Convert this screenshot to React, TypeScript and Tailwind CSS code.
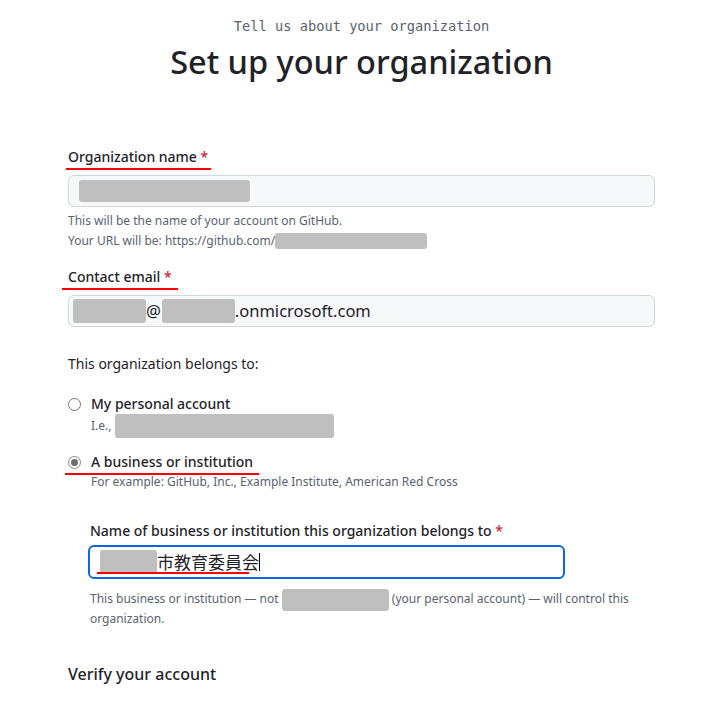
import React from "react";

const R = ({ w, h, className = "" }: { w: string; h: string; className?: string }) => (
  <span className={`inline-block bg-[#bfbfbf] rounded-[3px] align-middle ${w} ${h} ${className}`} />
);

export default function App() {
  return (
    <div className="w-[709px] h-[721px] bg-white overflow-hidden font-['Noto_Sans',sans-serif] text-[#1f2328]">
      <div className="ml-[68px] w-[587px] flex flex-col">
        <div className="pt-[16px] text-center font-['DejaVu_Sans_Mono',monospace] text-[13.7px] leading-[20px] text-[#59636e]">
          Tell us about your organization
        </div>
        <h1 className="text-center text-[32.5px] leading-[40px] font-medium mt-[6px]">Set up your organization</h1>

        <div className="mt-[65px] flex flex-col">
          <div className="relative w-fit text-[14px] leading-[20px] font-medium">
            Organization name <span className="text-[#d1242f]">*</span>
            <span className="absolute left-[-2px] right-[-3px] top-[21px] h-[2px] bg-[#ff0000]" />
          </div>
          <div className="mt-[8px] h-[32px] rounded-[6px] border border-[#d0d7de] bg-[#f6f8fa] flex items-center px-[10px]">
            <R w="w-[171px]" h="h-[22px]" />
          </div>
          <div className="mt-[4px] text-[12px] leading-[20px] text-[#59636e]">This will be the name of your account on GitHub.</div>
          <div className="text-[12px] leading-[20px] text-[#59636e] flex items-center">
            Your URL will be: https://github.com/<R w="w-[152px]" h="h-[16px]" />
          </div>

          <div className="mt-[16px] relative w-fit text-[14px] leading-[20px] font-medium">
            Contact email <span className="text-[#d1242f]">*</span>
            <span className="absolute left-[-6px] right-[-6px] top-[21px] h-[2px] bg-[#ff0000]" />
          </div>
          <div className="mt-[8px] h-[32px] rounded-[6px] border border-[#d0d7de] bg-[#f6f8fa] flex items-center pl-[4px] text-[16.5px]">
            <R w="w-[73px]" h="h-[24px]" />
            <span>@</span>
            <R w="w-[73px]" h="h-[24px]" className="ml-[1px]" />
            <span>.onmicrosoft.com</span>
          </div>

          <div className="mt-[27px] text-[14px] leading-[20px]">This organization belongs to:</div>

          <div className="mt-[20px] flex items-start">
            <span className="mt-[4px] w-[13px] h-[13px] rounded-full border border-[#767676] bg-white shrink-0" />
            <div className="ml-[10px] flex flex-col">
              <div className="text-[14px] leading-[20px] font-medium">My personal account</div>
              <div className="text-[12px] leading-[24px] text-[#59636e] flex items-center">
                I.e.,&nbsp;<R w="w-[219px]" h="h-[24px]" />
              </div>
            </div>
          </div>

          <div className="mt-[14px] flex items-start">
            <span className="mt-[4px] w-[13px] h-[13px] rounded-full border border-[#8a8a8a] bg-white shrink-0 flex items-center justify-center">
              <span className="w-[7px] h-[7px] rounded-full bg-[#6e6e6e]" />
            </span>
            <div className="ml-[10px] flex flex-col">
              <div className="relative w-fit text-[14px] leading-[20px] font-medium">
                A business or institution
                <span className="absolute left-[-26px] right-[-6px] top-[21px] h-[2px] bg-[#ff0000]" />
              </div>
              <div className="text-[12px] leading-[20px] text-[#59636e]">
                For example: GitHub, Inc., Example Institute, American Red Cross
              </div>
            </div>
          </div>

          <div className="ml-[20px] mt-[29px] flex flex-col">
            <div className="pl-[2px] text-[14px] leading-[20px] font-medium">
              Name of business or institution this organization belongs to <span className="text-[#d1242f]">*</span>
            </div>
            <div className="relative mt-[4px] w-[477px] h-[34px] rounded-[6px] border-2 border-[#0969da] bg-white flex items-center pl-[10px] text-[16px]">
              <R w="w-[57px]" h="h-[24px]" />
              <span className="font-['Noto_Sans_CJK_JP',sans-serif] text-[17px]">市教育委員会</span>
              <span className="w-[1px] h-[18px] bg-black" />
              <span className="absolute left-[7px] top-[25px] w-[152px] h-[2px] bg-[#ff0000]" />
            </div>
            <div className="mt-[10px] pl-[2px] text-[12px] leading-[20px] text-[#59636e]">
              This business or institution — not <R w="w-[107px]" h="h-[22px]" className="-my-[2px]" /> (your personal account) — will control this organization.
            </div>
          </div>

          <div className="mt-[33px] text-[16px] leading-[24px] font-medium">Verify your account</div>
        </div>
      </div>
    </div>
  );
}
